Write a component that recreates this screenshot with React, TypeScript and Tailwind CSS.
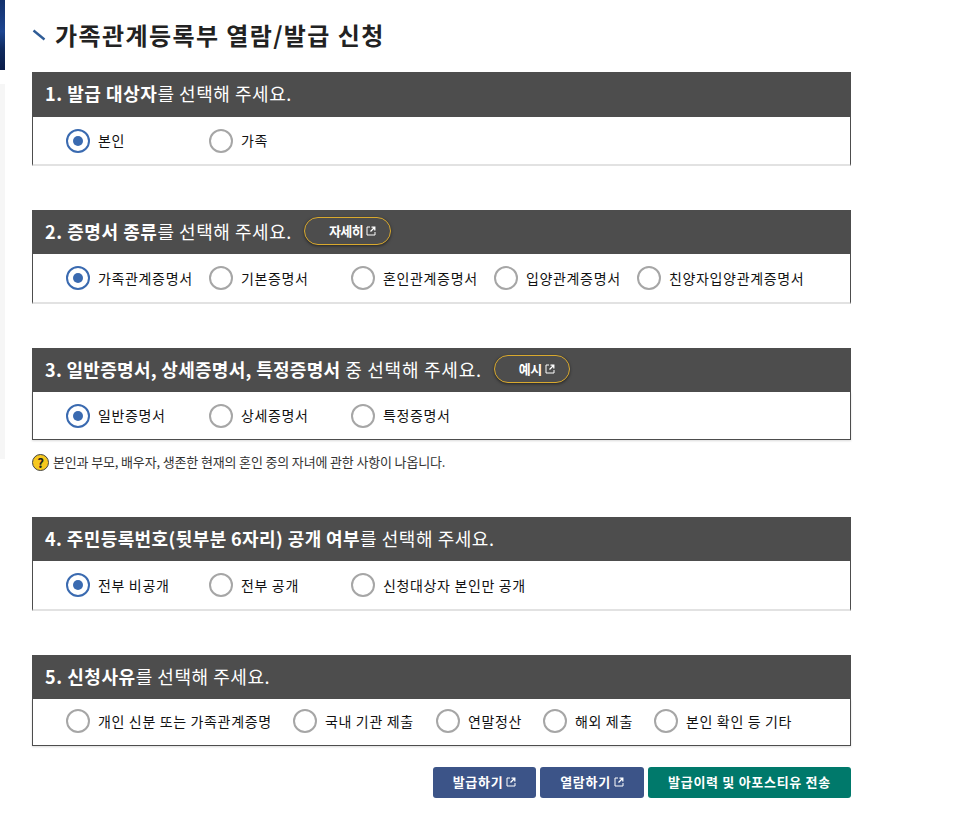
import type { ReactNode } from "react";

const FONT = "font-['Noto_Sans_CJK_KR','Noto_Sans',sans-serif]";

function ExtIcon({ className = "" }: { className?: string }) {
  return (
    <svg viewBox="0 0 10 10" className={`h-[10px] w-[10px] shrink-0 ${className}`} fill="none" stroke="currentColor">
      <path d="M4 1H1v8h8V6" strokeWidth="1" />
      <path d="M4.5 5.5l4-4M5.5 1.2h3.3v3.3" strokeWidth="1.3" />
    </svg>
  );
}

function Radio({ label, checked, width }: { label: string; checked?: boolean; width?: string }) {
  return (
    <label className={`flex items-center gap-2 ${width ?? ""}`}>
      {checked ? (
        <span className="flex h-6 w-6 shrink-0 items-center justify-center rounded-full border-2 border-[#3a6ab0] bg-white">
          <span className="h-[10px] w-[10px] rounded-full bg-[#3a6ab0]" />
        </span>
      ) : (
        <span className="h-6 w-6 shrink-0 rounded-full border-2 border-[#a6a6a6] bg-white" />
      )}
      <span className="whitespace-nowrap text-[14px] font-normal tracking-[0.65px] text-[#111]">{label}</span>
    </label>
  );
}

function PillButton({ label }: { label: string }) {
  return (
    <span className="ml-[12px] flex h-[28px] items-center gap-[3px] rounded-[14px] border-[1.5px] border-[#d9a92e] bg-[#4d4d4d] pl-[24px] pr-[14px] pb-[1px] text-[13px] font-bold tracking-[-0.5px] text-white shadow-[0_1px_3px_rgba(0,0,0,0.5)]">
      {label}
      <ExtIcon />
    </span>
  );
}

function Section({
  title,
  children,
  dark,
  bodyHeight,
  headerHeight = "h-[44px]",
}: {
  title: ReactNode;
  children: ReactNode;
  dark?: boolean;
  bodyHeight: string;
  headerHeight?: string;
}) {
  return (
    <section className="w-[819px]">
      <h3 className={`flex items-center bg-[#4d4d4d] pl-[13px] text-[18px] font-normal tracking-[0.55px] text-white ${headerHeight}`}>
        <span className="-translate-y-[1px] whitespace-nowrap">{title}</span>
      </h3>
      <div
        className={`flex items-center border-x border-x-[#4d4d4d] pl-[33px] ${bodyHeight} ${
          dark ? "border-b border-b-[#4d4d4d] shadow-[0_1px_2px_rgba(0,0,0,0.15)]" : "border-b-2 border-b-[#e2e2e2]"
        }`}
      >
        {children}
      </div>
    </section>
  );
}

function ActionButton({ label, green, width, icon }: { label: string; green?: boolean; width: string; icon?: boolean }) {
  return (
    <button
      className={`flex h-[31px] items-center justify-center gap-[3px] rounded-[3px] pb-[1px] text-[13px] font-bold tracking-[0.7px] text-white ${width} ${
        green ? "bg-[#00796b]" : "bg-[#3c5488]"
      }`}
    >
      {label}
      {icon && <ExtIcon />}
    </button>
  );
}

export default function App() {
  return (
    <div className={`relative h-[829px] w-[967px] overflow-hidden bg-white ${FONT}`}>
      {/* side menu edge, cut off by the window */}
      <div className="absolute left-0 top-0 h-[70px] w-[5px] bg-[linear-gradient(180deg,#12306b,#1d4590_45%,#0f2a5e_70%,#0a1c48)]" />
      <div className="absolute left-0 top-[84px] h-[375px] w-[5px] bg-[#f6f6f6]" />

      <main className="ml-[32px] flex w-[819px] flex-col">
        <h2 className="flex h-[72px] items-center pb-[3px] text-[24px] font-bold tracking-[1.4px] text-[#222]">
          <svg viewBox="0 0 14 12" className="mr-[9px] h-3 w-[14px] shrink-0">
            <path d="M1.5 1.5L12.5 10.5" stroke="#2f5c96" strokeWidth="2.4" />
          </svg>
          가족관계등록부 열람/발급 신청
        </h2>

        <Section
          headerHeight="h-[45px]"
          bodyHeight="h-[49px]"
          title={
            <>
              <b>1. 발급 대상자</b>를 선택해 주세요.
            </>
          }
        >
          <Radio label="본인" checked width="w-[143px]" />
          <Radio label="가족" />
        </Section>

        <div className="h-[44px]" />
        <Section
          bodyHeight="h-[50px]"
          title={
            <span className="flex items-center">
              <span>
                <b>2. 증명서 종류</b>를 선택해 주세요.
              </span>
              <PillButton label="자세히" />
            </span>
          }
        >
          <Radio label="가족관계증명서" checked width="w-[143px]" />
          <Radio label="기본증명서" width="w-[142px]" />
          <Radio label="혼인관계증명서" width="w-[143px]" />
          <Radio label="입양관계증명서" width="w-[143px]" />
          <Radio label="친양자입양관계증명서" />
        </Section>

        <div className="h-[44px]" />
        <Section
          dark
          bodyHeight="h-[48px]"
          title={
            <span className="flex items-center">
              <span className="tracking-[0.75px]">
                <b className="tracking-[0.3px]">3. 일반증명서, 상세증명서, 특정증명서</b>&nbsp;중 선택해 주세요.
              </span>
              <PillButton label="예시" />
            </span>
          }
        >
          <Radio label="일반증명서" checked width="w-[143px]" />
          <Radio label="상세증명서" width="w-[142px]" />
          <Radio label="특정증명서" />
        </Section>

        <p className="mt-[13px] flex h-[18px] items-center gap-[4px] text-[13px] tracking-[-0.15px] text-[#333]">
          <span className="flex h-[17px] w-[17px] items-center justify-center rounded-full border border-[#444] bg-[#f7c81e] text-[13px] font-bold leading-none text-[#222]">
            ?
          </span>
          본인과 부모, 배우자, 생존한 현재의 혼인 중의 자녀에 관한 사항이 나옵니다.
        </p>

        <div className="h-[46px]" />
        <Section
          bodyHeight="h-[50px]"
          title={
            <>
              <b className="tracking-[0.4px]">4. 주민등록번호(뒷부분 6자리) 공개 여부</b>를 선택해 주세요.
            </>
          }
        >
          <Radio label="전부 비공개" checked width="w-[143px]" />
          <Radio label="전부 공개" width="w-[142px]" />
          <Radio label="신청대상자 본인만 공개" />
        </Section>

        <div className="h-[44px]" />
        <Section
          dark
          bodyHeight="h-[47px] pb-[2px]"
          title={
            <>
              <b>5. 신청사유</b>를 선택해 주세요.
            </>
          }
        >
          <Radio label="개인 신분 또는 가족관계증명" width="w-[227px]" />
          <Radio label="국내 기관 제출" width="w-[143px]" />
          <Radio label="연말정산" width="w-[107px]" />
          <Radio label="해외 제출" width="w-[111px]" />
          <Radio label="본인 확인 등 기타" />
        </Section>

        <div className="mt-[21px] flex justify-end gap-[4px]">
          <ActionButton label="발급하기" icon width="w-[103px]" />
          <ActionButton label="열람하기" icon width="w-[104px]" />
          <ActionButton label="발급이력 및 아포스티유 전송" green width="w-[203px]" />
        </div>
      </main>
    </div>
  );
}
